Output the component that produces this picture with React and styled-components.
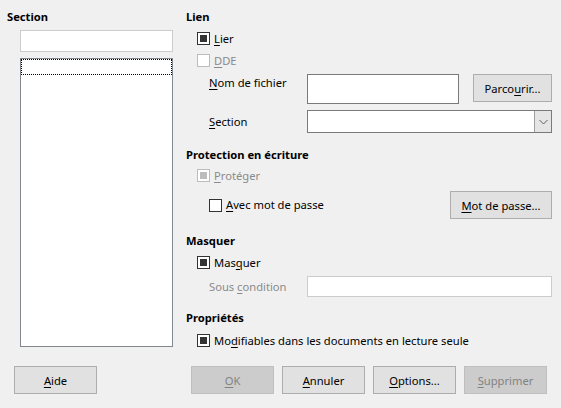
import React from "react";
import styled, { createGlobalStyle } from "styled-components";

const Global = createGlobalStyle`
  html, body { margin: 0; padding: 0; background: #f0f0f0; }
  * { box-sizing: border-box; }
`;

const Page = styled.div`
  width: 561px;
  height: 408px;
  background: #f0f0f0;
  color: #000;
  font-family: "Noto Sans", "Open Sans", sans-serif;
  font-size: 11.2px;
  padding-top: 9px;
  display: flex;
  flex-direction: column;
  overflow: hidden;
`;

const Main = styled.div`
  display: flex;
  height: 340px;
`;

const LeftCol = styled.div`
  width: 186px;
  padding-left: 7px;
  display: flex;
  flex-direction: column;
`;

const RightCol = styled.div`
  width: 366px;
  display: flex;
  flex-direction: column;
`;

const Heading = styled.div`
  height: 16px;
  line-height: 16px;
  font-weight: bold;
  margin-top: ${({ $mt }) => $mt || 0}px;
  white-space: nowrap;
`;

const TextInput = styled.div`
  width: ${({ $w }) => $w}px;
  height: ${({ $h }) => $h}px;
  margin-left: ${({ $ml }) => $ml || 0}px;
  margin-top: ${({ $mt }) => $mt || 0}px;
  background: #fff;
  border: 1px solid ${({ $light }) => ($light ? "#cccccc" : "#7a7a7a")};
  flex-shrink: 0;
`;

const ListBox = styled.div`
  width: 153px;
  height: 289px;
  margin-left: 13px;
  margin-top: 6px;
  background: #fff;
  border: 1px solid #828790;
`;

const FocusRow = styled.div`
  height: 16px;
  border: 1px dotted #000;
`;

const Row = styled.div`
  display: flex;
  align-items: ${({ $top }) => ($top ? "flex-start" : "center")};
  height: ${({ $h }) => $h}px;
  margin-top: ${({ $mt }) => $mt || 0}px;
  padding-left: ${({ $pl }) => $pl || 0}px;
  white-space: nowrap;
`;

const Box = styled.span`
  width: 13px;
  height: 13px;
  flex-shrink: 0;
  border: 1px solid ${({ $disabled }) => ($disabled ? "#bcbcbc" : "#333333")};
  background: #fff;
  display: flex;
  align-items: center;
  justify-content: center;
  margin-right: 4px;
  &::after {
    content: "";
    display: ${({ $checked }) => ($checked ? "block" : "none")};
    width: 7px;
    height: 7px;
    background: ${({ $disabled }) => ($disabled ? "#bcbcbc" : "#333333")};
  }
`;

const Label = styled.span`
  color: ${({ $disabled }) => ($disabled ? "#8a8a8a" : "#000")};
  line-height: 16px;
  width: ${({ $w }) => ($w ? `${$w}px` : "auto")};
  padding-top: ${({ $pt }) => $pt || 0}px;
  flex-shrink: 0;
`;

const U = styled.span`
  text-decoration: underline;
  text-underline-offset: 2px;
`;

const Spacer = styled.div`
  flex: 1;
`;

const Button = styled.button`
  width: ${({ $w }) => $w || 83}px;
  height: ${({ $h }) => $h || 28}px;
  flex-shrink: 0;
  font-family: inherit;
  font-size: 11.2px;
  padding: 0;
  background: ${({ disabled }) => (disabled ? "#cccccc" : "#e1e1e1")};
  border: 1px solid ${({ disabled }) => (disabled ? "#bfbfbf" : "#adadad")};
  color: ${({ disabled }) => (disabled ? "#838383" : "#000")};
  margin-left: ${({ $ml }) => $ml || 0}px;
  white-space: nowrap;
`;

const Select = styled.div`
  width: 245px;
  height: 23px;
  background: #fff;
  border: 1px solid #7a7a7a;
  display: flex;
  justify-content: flex-end;
`;

const DropButton = styled.div`
  width: 17px;
  height: 100%;
  background: #e5e5e5;
  border-left: 1px solid #a0a0a0;
  display: flex;
  align-items: center;
  justify-content: center;
`;

const Footer = styled.div`
  display: flex;
  align-items: center;
  margin-top: 17px;
  padding: 0 14px;
`;

const Group = styled.div`
  display: flex;
  gap: 8px;
`;

const Check = ({ checked, disabled, children }) => (
  <>
    <Box $checked={checked} $disabled={disabled} />
    <Label $disabled={disabled}>{children}</Label>
  </>
);

export default function App() {
  return (
    <Page>
      <Global />
      <Main>
        <LeftCol>
          <Heading>Section</Heading>
          <TextInput $w={153} $h={22} $ml={13} $mt={5} $light />
          <ListBox>
            <FocusRow />
          </ListBox>
        </LeftCol>
        <RightCol>
          <Heading>Lien</Heading>
          <Row $h={17} $mt={5} $pl={11}>
            <Check checked><U>L</U>ier</Check>
          </Row>
          <Row $h={17} $mt={5} $pl={11}>
            <Check disabled><U>D</U>DE</Check>
          </Row>
          <Row $h={30} $mt={5} $pl={23} $top>
            <Label $w={98} $pt={1}><U>N</U>om de fichier</Label>
            <TextInput $w={152} $h={30} />
            <Button $w={79} $h={28} $ml={14}>Parco<U>u</U>rir...</Button>
          </Row>
          <Row $h={23} $mt={6} $pl={23}>
            <Label $w={98}><U>S</U>ection</Label>
            <Select>
              <DropButton>
                <svg width="9" height="6" viewBox="0 0 9 6">
                  <path d="M0.5 1 L4.5 5 L8.5 1" fill="none" stroke="#606060" strokeWidth="1" />
                </svg>
              </DropButton>
            </Select>
          </Row>
          <Heading $mt={14}>Protection en écriture</Heading>
          <Row $h={17} $mt={4} $pl={11}>
            <Check checked disabled><U>P</U>rotéger</Check>
          </Row>
          <Row $h={28} $mt={7} $pl={23}>
            <Check><U>A</U>vec mot de passe</Check>
            <Spacer />
            <Button $w={102} $h={28}><U>M</U>ot de passe...</Button>
          </Row>
          <Heading $mt={14}>Masquer</Heading>
          <Row $h={17} $mt={5} $pl={11}>
            <Check checked>Mas<U>q</U>uer</Check>
          </Row>
          <Row $h={21} $mt={5} $pl={23}>
            <Label $w={98} $disabled>Sous <U>c</U>ondition</Label>
            <TextInput $w={245} $h={21} $light />
          </Row>
          <Heading $mt={13}>Propriétés</Heading>
          <Row $h={17} $mt={6} $pl={11}>
            <Check checked>Mo<U>d</U>ifiables dans les documents en lecture seule</Check>
          </Row>
        </RightCol>
      </Main>
      <Footer>
        <Button><U>A</U>ide</Button>
        <Spacer />
        <Group>
          <Button disabled><U>O</U>K</Button>
          <Button><U>A</U>nnuler</Button>
          <Button><U>O</U>ptions...</Button>
          <Button disabled><U>S</U>upprimer</Button>
        </Group>
      </Footer>
    </Page>
  );
}
